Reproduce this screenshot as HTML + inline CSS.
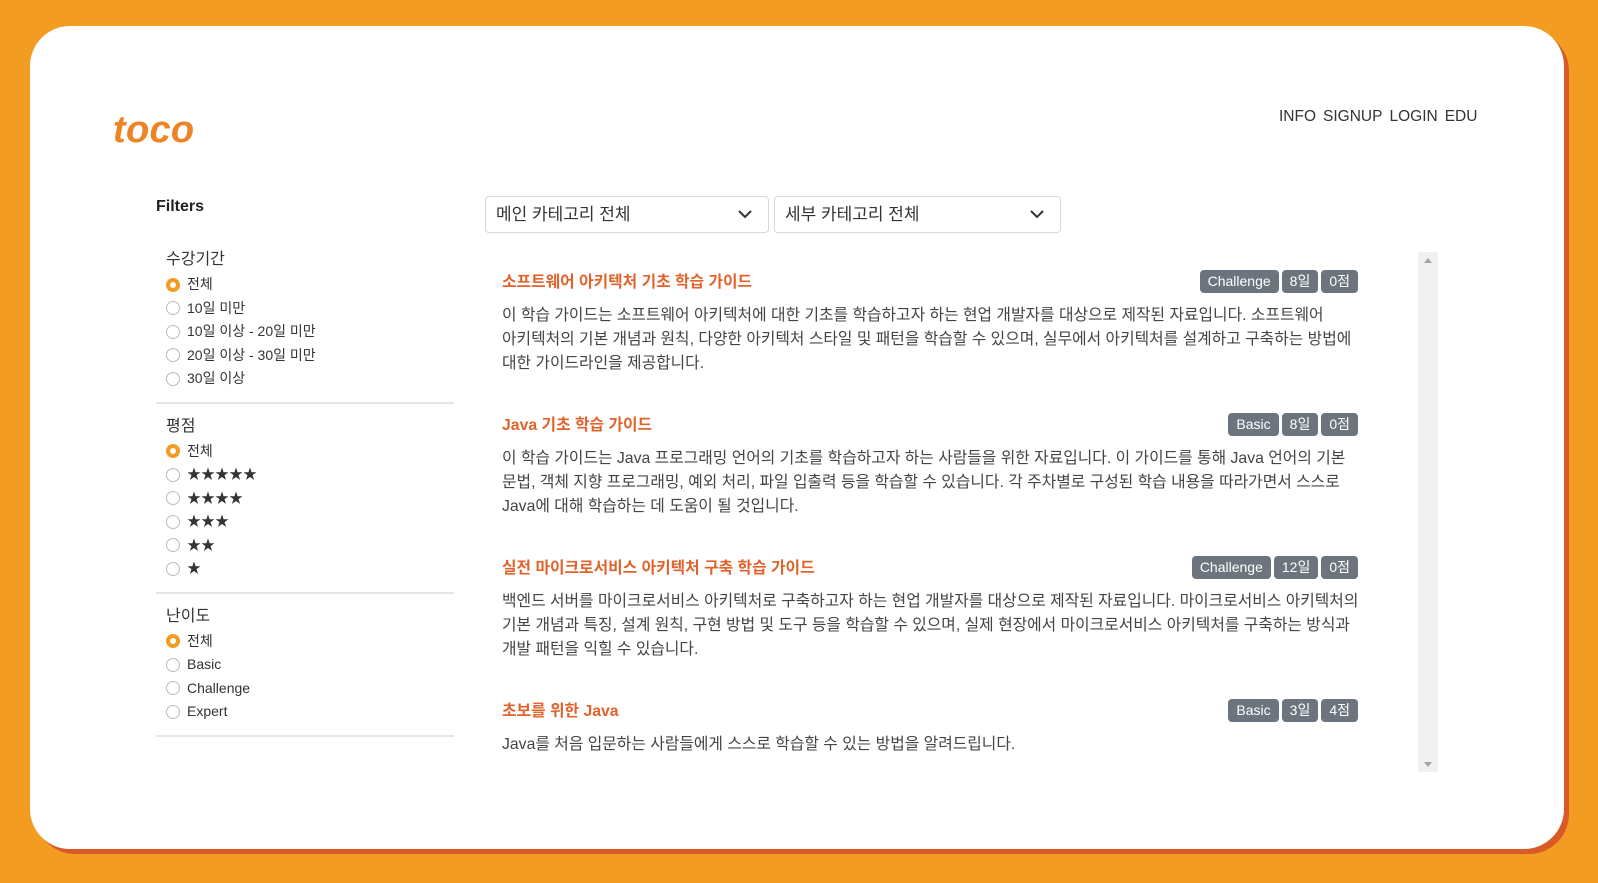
<!DOCTYPE html>
<html><head><meta charset="utf-8"><style>
*{box-sizing:border-box;margin:0;padding:0}
html,body{width:1598px;height:883px;overflow:hidden;background:#f29c22;font-family:"Liberation Sans","Noto Sans CJK KR",sans-serif;color:#333}
.card{position:absolute;left:30px;top:26px;width:1534px;height:823px;background:#fff;border-radius:40px;box-shadow:5px 5px 0 #d95a27}
.logo{position:absolute;left:113px;top:109px;font:italic bold 38px "Liberation Sans",sans-serif;color:#ec8424;letter-spacing:0.3px}
.nav{position:absolute;left:1279px;top:108px;font-size:15.5px;color:#333}
.nav span{margin-right:7px}
.filters{position:absolute;left:156px;top:198px;width:298px}
.ft{font-weight:bold;font-size:16px;color:#222;height:49px}
.grp{padding:0 10px;border-bottom:2px solid #e6e6e6;padding-bottom:11px;margin-bottom:10px}
.gt{font-size:16px;color:#333;height:26px;line-height:26px}
.r{height:23.5px;line-height:23.5px;font-size:14px;color:#333;display:flex;align-items:center}
.r i{display:inline-block;width:14px;height:14px;border-radius:50%;border:1px solid #bbb;margin-right:7px;flex:none}
.r i.on{border:4px solid #f29c22}
.sel{position:absolute;top:196px;height:37px;border:1px solid #d9d9d9;border-radius:4px;font-size:17px;color:#333;padding-left:10px;line-height:35px}
.sel svg{position:absolute;right:16px;top:12px}
.list{position:absolute;left:502px;top:270px;width:856px}
.item{height:143px;position:relative}
.tt{font-size:15.8px;font-weight:bold;color:#e2622b;height:34px;line-height:26px}
.d{font-size:15.8px;line-height:24px;color:#444;white-space:nowrap}
.b{position:absolute;right:0;top:0;display:flex;gap:3px}
.b span{background:#6c757d;color:#fff;font-size:14px;height:23px;line-height:23px;padding:0 8px;border-radius:4px}
.sb{position:absolute;left:1418px;top:252px;width:20px;height:520px;background:#f0f0f0}
</style></head><body>
<div class="card"></div>
<div class="logo">toco</div>
<div class="nav"><span>INFO</span><span>SIGNUP</span><span>LOGIN</span>EDU</div>
<div class="filters">
<div class="ft">Filters</div>
<div class="grp"><div class="gt">수강기간</div>
<div class="r"><i class="on"></i>전체</div><div class="r"><i></i>10일 미만</div><div class="r"><i></i>10일 이상 - 20일 미만</div><div class="r"><i></i>20일 이상 - 30일 미만</div><div class="r"><i></i>30일 이상</div></div>
<div class="grp"><div class="gt">평점</div>
<div class="r"><i class="on"></i>전체</div><div class="r"><i></i>★★★★★</div><div class="r"><i></i>★★★★</div><div class="r"><i></i>★★★</div><div class="r"><i></i>★★</div><div class="r"><i></i>★</div></div>
<div class="grp"><div class="gt">난이도</div>
<div class="r"><i class="on"></i>전체</div><div class="r"><i></i>Basic</div><div class="r"><i></i>Challenge</div><div class="r"><i></i>Expert</div></div>
</div>
<div class="sel" style="left:485px;width:284px">메인 카테고리 전체<svg width="14" height="10" viewBox="0 0 14 10"><path d="M1 2l6 6 6-6" fill="none" stroke="#333" stroke-width="2"/></svg></div>
<div class="sel" style="left:774px;width:287px">세부 카테고리 전체<svg width="14" height="10" viewBox="0 0 14 10"><path d="M1 2l6 6 6-6" fill="none" stroke="#333" stroke-width="2"/></svg></div>
<div class="list">
<div class="item"><div class="tt">소프트웨어 아키텍처 기초 학습 가이드</div><div class="b"><span>Challenge</span><span>8일</span><span>0점</span></div><div class="d">이 학습 가이드는 소프트웨어 아키텍처에 대한 기초를 학습하고자 하는 현업 개발자를 대상으로 제작된 자료입니다. 소프트웨어<br>아키텍처의 기본 개념과 원칙, 다양한 아키텍처 스타일 및 패턴을 학습할 수 있으며, 실무에서 아키텍처를 설계하고 구축하는 방법에<br>대한 가이드라인을 제공합니다.</div></div>
<div class="item"><div class="tt">Java 기초 학습 가이드</div><div class="b"><span>Basic</span><span>8일</span><span>0점</span></div><div class="d">이 학습 가이드는 Java 프로그래밍 언어의 기초를 학습하고자 하는 사람들을 위한 자료입니다. 이 가이드를 통해 Java 언어의 기본<br>문법, 객체 지향 프로그래밍, 예외 처리, 파일 입출력 등을 학습할 수 있습니다. 각 주차별로 구성된 학습 내용을 따라가면서 스스로<br>Java에 대해 학습하는 데 도움이 될 것입니다.</div></div>
<div class="item"><div class="tt">실전 마이크로서비스 아키텍처 구축 학습 가이드</div><div class="b"><span>Challenge</span><span>12일</span><span>0점</span></div><div class="d">백엔드 서버를 마이크로서비스 아키텍처로 구축하고자 하는 현업 개발자를 대상으로 제작된 자료입니다. 마이크로서비스 아키텍처의<br>기본 개념과 특징, 설계 원칙, 구현 방법 및 도구 등을 학습할 수 있으며, 실제 현장에서 마이크로서비스 아키텍처를 구축하는 방식과<br>개발 패턴을 익힐 수 있습니다.</div></div>
<div class="item"><div class="tt">초보를 위한 Java</div><div class="b"><span>Basic</span><span>3일</span><span>4점</span></div><div class="d">Java를 처음 입문하는 사람들에게 스스로 학습할 수 있는 방법을 알려드립니다.</div></div>
</div>
<div class="sb"><svg width="20" height="520"><path d="M6 11h8l-4-5z" fill="#a3a3a3"/><path d="M6 510h8l-4 5z" fill="#a3a3a3"/></svg></div>
</body></html>
